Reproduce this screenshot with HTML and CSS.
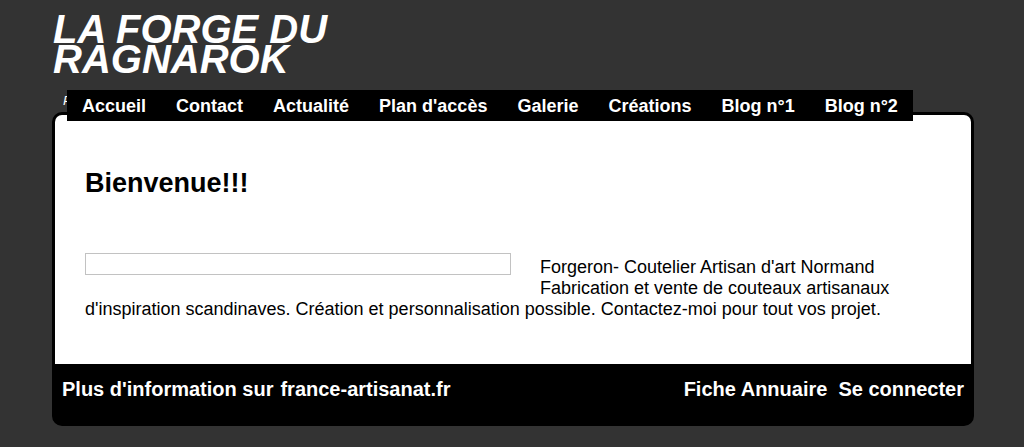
FILE: index.html
```html
<!DOCTYPE html>
<html lang="fr">
<head>
<meta charset="utf-8">
<title>La Forge du Ragnarok</title>
<link rel="stylesheet" href="styles.css">
</head>
<body>
<div class="page">
  <header class="header">
    <h1 class="site-title">LA FORGE DU<br>RAGNAROK</h1>
    <div class="subhead">
      <p class="slogan">Passion du métal</p>
      <nav class="nav">
        <a href="#">Accueil</a>
        <a href="#">Contact</a>
        <a href="#">Actualité</a>
        <a href="#">Plan d'accès</a>
        <a href="#">Galerie</a>
        <a href="#">Créations</a>
        <a href="#">Blog n°1</a>
        <a href="#">Blog n°2</a>
      </nav>
    </div>
  </header>
  <div class="box">
    <main class="main">
      <h2 class="title">Bienvenue!!!</h2>
      <div class="intro">
        <div class="picture"></div>
        <p class="text">Forgeron- Coutelier Artisan d'art Normand Fabrication et vente de couteaux artisanaux d'inspiration scandinaves. Création et personnalisation possible. Contactez-moi pour tout vos projet.</p>
      </div>
    </main>
    <footer class="footer">
      <div class="footer-left">
        <span>Plus d'information sur</span>
        <a href="#">france-artisanat.fr</a>
      </div>
      <div class="footer-right">
        <a href="#">Fiche Annuaire</a>
        <a href="#">Se connecter</a>
      </div>
    </footer>
  </div>
</div>
</body>
</html>
```

FILE: styles.css
```css
html, body {
  margin: 0;
  padding: 0;
}
body {
  background: #333333;
  font-family: "Liberation Sans", Arial, sans-serif;
  color: #000;
}
.page {
  width: 922px;
  margin-left: 52px;
}
.header {
  padding-top: 14px;
}
.site-title {
  margin: 0 0 0 1px;
  font-size: 40px;
  line-height: 30px;
  font-weight: bold;
  font-style: italic;
  color: #fff;
}
.subhead {
  display: grid;
  margin-top: 16px;
}
.slogan {
  grid-area: 1 / 1;
  margin: 3px 0 0 11px;
  font-size: 13px;
  font-style: italic;
  color: #fff;
}
.nav {
  grid-area: 1 / 1;
  justify-self: start;
  position: relative;
  z-index: 2;
  display: flex;
  margin-left: 15px;
  background: #000;
  padding: 6px 0 4px;
}
.nav a {
  padding: 0 15px;
  font-size: 18px;
  font-weight: bold;
  color: #fff;
  text-decoration: none;
}
.box {
  position: relative;
  margin-top: -9px;
  border: 3px solid #000;
  border-radius: 10px;
  background: #000;
  overflow: hidden;
}
.main {
  background: #fff;
  padding: 53px 30px 44px;
}
.title {
  margin: 0;
  font-size: 27px;
  font-weight: bold;
}
.intro {
  margin-top: 58px;
}
.intro::after {
  content: "";
  display: block;
  clear: both;
}
.picture {
  float: left;
  width: 424px;
  height: 20px;
  border: 1px solid #c2c2c2;
  margin: -4px 29px 10px 0;
}
.text {
  margin: 0;
  font-size: 18px;
}
.footer {
  display: flex;
  justify-content: space-between;
  padding: 14px 7px 22px;
  font-size: 20px;
  font-weight: bold;
  color: #fff;
}
.footer a {
  color: #fff;
  text-decoration: none;
}
.footer-left {
  display: flex;
  gap: 7px;
}
.footer-right {
  display: flex;
  gap: 11px;
}
```
